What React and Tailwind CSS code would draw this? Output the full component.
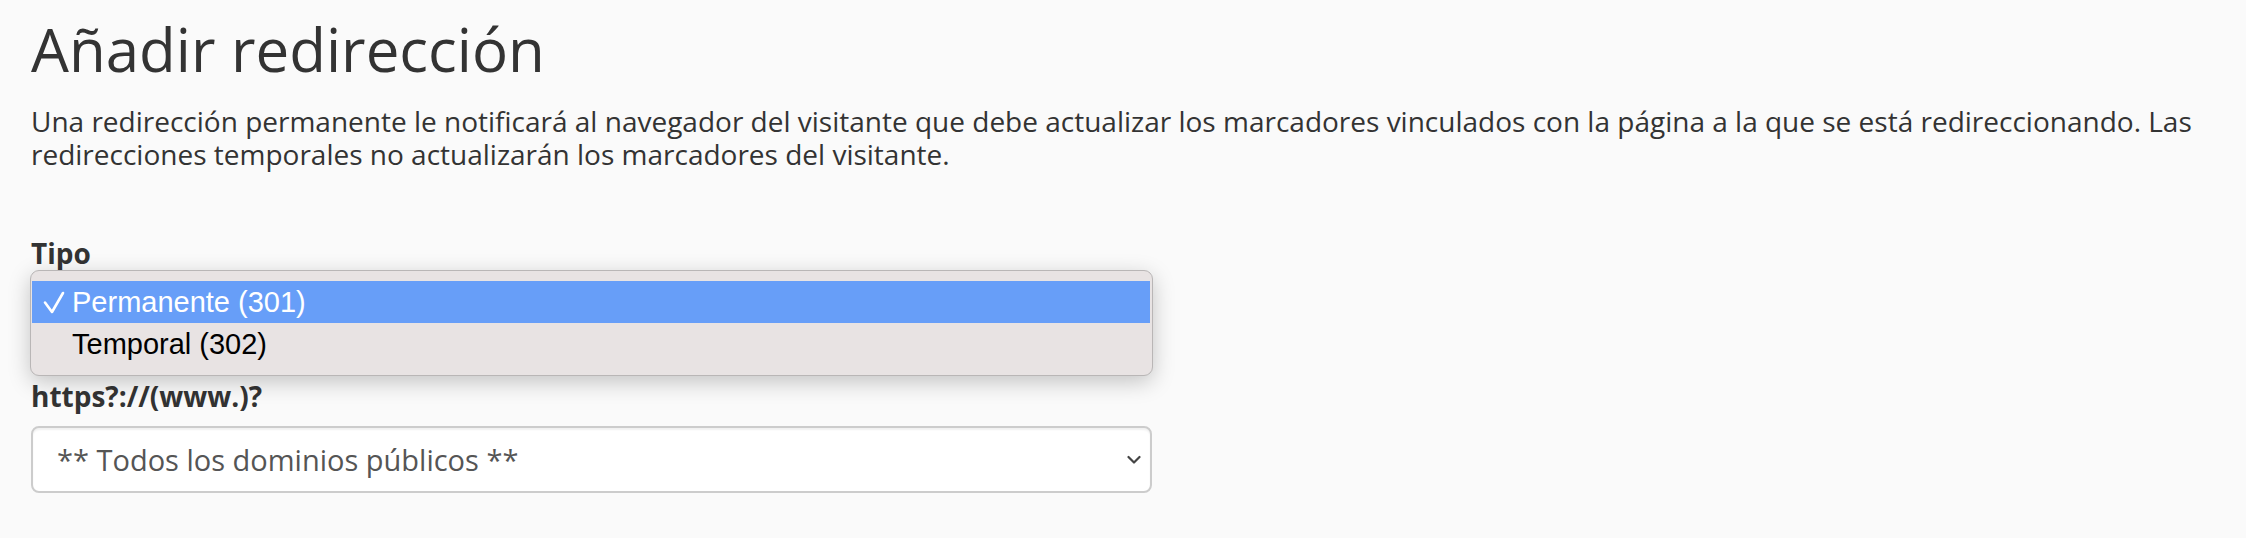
import React from "react";

export default function App() {
  return (
    <div
      className="min-h-[538px] w-full bg-[#fafafa] pl-[31px] pr-[30px] text-[#333]"
      style={{ fontFamily: '"Open Sans", "Noto Sans", sans-serif' }}
    >
      <h1 className="pt-[16px] text-[60px] font-normal leading-[66px] text-[#333]">
        Añadir redirección
      </h1>
      <p className="mt-[23px] text-[28px] leading-[33px] text-[#333]">
        Una redirección permanente le notificará al navegador del visitante que debe actualizar los marcadores
        vinculados con la página a la que se está redireccionando. Las redirecciones temporales no actualizarán
        los marcadores del visitante.
      </p>

      <div className="mt-[66px] w-[1121px]">
        <label className="block text-[28px] font-bold leading-[33px] text-[#333]">Tipo</label>
        <div className="relative mt-[10px] h-[66px] rounded-[8px] border-2 border-[#6a9ef5] bg-white">
          <div
            className="absolute left-[-3px] top-[-12px] z-10 flex w-[1123px] flex-col rounded-[9px] border border-[#b9b6b6] bg-[#e8e3e3] pb-[10px] pt-[10px] pl-[1px] pr-[2px] shadow-[0_6px_22px_rgba(0,0,0,0.22)]"
            style={{ fontFamily: '"Liberation Sans", Arial, sans-serif' }}
          >
            <div className="relative flex h-[42px] items-center bg-[#679ef8] pl-[40px] text-[29px] text-white">
              <svg
                className="absolute left-[11px] top-[10px]"
                width="22"
                height="24"
                viewBox="0 0 22 24"
                fill="none"
              >
                <path d="M2 11.5 L9 21 L20 2" stroke="white" strokeWidth="2.6" strokeLinecap="round" strokeLinejoin="round" />
              </svg>
              <span className="leading-none">Permanente (301)</span>
            </div>
            <div className="flex h-[42px] items-center pl-[40px] text-[29px] text-black">
              <span className="leading-none">Temporal (302)</span>
            </div>
          </div>
        </div>

        <label className="mt-[34px] block text-[28px] font-bold leading-[33px] text-[#333]">
          https?://(www.)?
        </label>
        <div className="mt-[13px] flex h-[67px] items-center justify-between rounded-[8px] border-2 border-[#cccccc] bg-white pl-[24px] pr-[9px] shadow-[inset_0_2px_2px_rgba(0,0,0,0.06)]">
          <span className="text-[29px] leading-none text-[#555]">** Todos los dominios públicos **</span>
          <svg width="14" height="10" viewBox="0 0 14 10" fill="none">
            <path d="M1.5 2 L7 7.5 L12.5 2" stroke="#444" strokeWidth="2.2" strokeLinecap="round" strokeLinejoin="round" />
          </svg>
        </div>
      </div>
    </div>
  );
}
